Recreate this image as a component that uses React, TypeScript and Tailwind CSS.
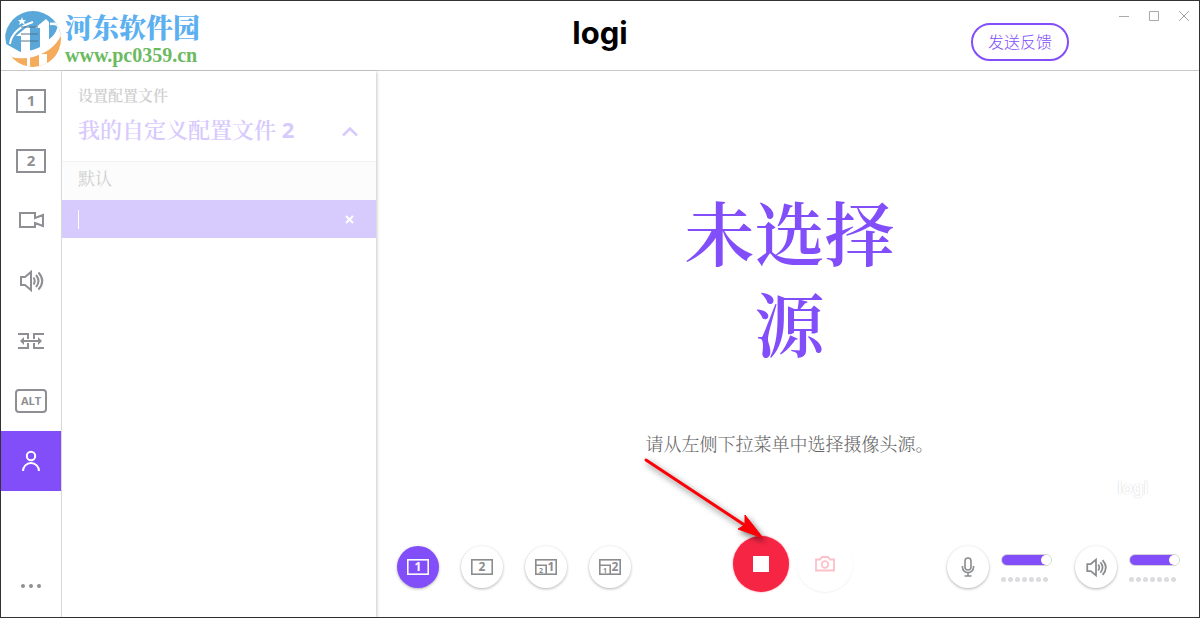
import type { ReactNode } from "react"
import clsx from "clsx"

const sans = "font-['Open_Sans','Noto_Sans_CJK_SC',sans-serif]"
const cjk = "font-['Open_Sans','Noto_Serif_CJK_SC','Noto_Sans_CJK_SC',sans-serif]"

/* ---------- Icons ---------- */

function Screen({ n }: { n: string }) {
	return (
		<svg width="32" height="26" viewBox="0 0 32 26" fill="none" stroke="currentColor" strokeWidth="2">
			<rect x="2" y="2" width="28" height="22" />
			<text x="16" y="18" textAnchor="middle" fontSize="15" fontWeight="700" fill="currentColor" stroke="none">{n}</text>
		</svg>
	)
}

function Camcorder() {
	return (
		<svg width="32" height="26" viewBox="0 0 32 26" fill="none" stroke="currentColor" strokeWidth="2">
			<path d="M5 5h15v5l8-3v11l-8-3v4H5z" />
		</svg>
	)
}

function Speaker({ small }: { small?: boolean }) {
	return (
		<svg width={small ? 28 : 32} height={small ? 23 : 26} viewBox="0 0 32 26" fill="none" stroke="currentColor" strokeWidth="2">
			<path d="M6 9h4l6-5v18l-6-5H6z" />
			<path d="M18.500 9.500Q21 13 18.500 16.500M21 7Q26 13 21 19M23.500 4.500Q31 13 23.500 21.500" />
		</svg>
	)
}

function Transition() {
	return (
		<svg width="32" height="26" viewBox="0 0 32 26" fill="none" stroke="currentColor" strokeWidth="2">
			<path d="M3 6h10v5M29 6H19v5M3 20h10v-5M29 20H19v-5M8 13h16" />
			<path d="M9 9v8l-4-4zM23 9v8l4-4z" fill="currentColor" stroke="none" />
		</svg>
	)
}

function Alt() {
	return (
		<svg width="32" height="26" viewBox="0 0 32 26" fill="none" stroke="currentColor" strokeWidth="2">
			<rect x="1" y="2" width="30" height="22" rx="3" />
			<text x="16" y="17" textAnchor="middle" fontSize="11" fontWeight="700" fill="currentColor" stroke="none">ALT</text>
		</svg>
	)
}

function Person() {
	return (
		<svg width="32" height="26" viewBox="0 0 32 26" fill="none" stroke="currentColor" strokeWidth="2">
			<circle cx="16" cy="8" r="4.200" />
			<path d="M8 23a8 8 0 0 1 16 0" />
		</svg>
	)
}

function Scene({ main, inset }: { main: string; inset?: string }) {
	return (
		<svg width="22" height="16" viewBox="0 0 22 16" fill="none" stroke="currentColor" strokeWidth="1.6" fontWeight="700">
			<rect x="0.800" y="0.800" width="20.400" height="14.400" />
			{inset && <path d="M1 6.200h10.200V15" />}
			{inset && <text x="6" y="13.500" textAnchor="middle" fontSize="7" fill="currentColor" stroke="none">{inset}</text>}
			<text x={inset ? 16 : 11} y="12" textAnchor="middle" fontSize="12" fill="currentColor" stroke="none">{main}</text>
		</svg>
	)
}

function Mic() {
	return (
		<svg width="14" height="20" viewBox="0 0 14 20" fill="none" stroke="currentColor" strokeWidth="1.6">
			<rect x="4" y="1" width="6" height="12" rx="3" />
			<path d="M1.500 9v1.500a5.500 5 0 0 0 11 0V9M7 15.500V19M3.500 19h7" />
		</svg>
	)
}

function Camera() {
	return (
		<svg width="20" height="16" viewBox="0 0 20 16" fill="none" stroke="currentColor" strokeWidth="1.800">
			<path d="M1 3.500h4L7 1h6l2 2.500h4V14.500H1z" />
			<circle cx="10" cy="8.500" r="3.300" />
		</svg>
	)
}

function SiteMark() {
	return (
		<svg className="shrink-0" width="62" height="62" viewBox="0 0 62 62">
			<clipPath id="disc"><circle cx="31" cy="31" r="28" /></clipPath>
			<g clipPath="url(#disc)">
				<path d="M0 0h62v24L40 42 22 46 4 36z" fill="#5aa8d9" />
				<path d="M5 45q11 8 26 4Q53 43 60 25v37H5z" fill="#f5ab5c" />
				{/* rings */}
				<path d="M8 36C9 26 18 18 31 14" stroke="#fff" strokeWidth="2" fill="none" />
				<path d="M1 36c4 10 13 13 26 10 14-3 27-12 31-24" stroke="#fff" strokeWidth="6" fill="none" />
				<path d="M48 16c6-1 10 1 8 6-2 6-7 10-12 13" stroke="#fff" strokeWidth="2.500" fill="none" />
				{/* buildings */}
				<path d="M14 28l12-10 2 2v24h-9V28z" fill="#fff" />
				<path d="M33 20l11-9 3 3v24l-9 4V20z" fill="#fff" />
				<path d="M25 49h3v12h-3zM37 46h8v14h-8z" fill="#fff" />
			</g>
			<path d="M20 9l1 3h3l-2 2 1 3-3-2-3 2 1-3-2-2h3z" fill="#fff" />
			<path d="M19 19h17M19 26h17M19 33h17" stroke="#53748c" strokeWidth="1.500" opacity=".65" />
		</svg>
	)
}

/* ---------- Pieces ---------- */

const navItems: { label: string; icon: ReactNode }[] = [
	{ label: "1", icon: <Screen n="1" /> },
	{ label: "2", icon: <Screen n="2" /> },
	{ label: "video", icon: <Camcorder /> },
	{ label: "audio", icon: <Speaker /> },
	{ label: "transition", icon: <Transition /> },
	{ label: "alt", icon: <Alt /> },
	{ label: "profile", icon: <Person /> },
]

function RoundButton({ label, active, children }: { label: string; active?: boolean; children: ReactNode }) {
	return (
		<button
			aria-label={label}
			className={clsx(
				"flex size-[42px] shrink-0 items-center justify-center rounded-full shadow-[0_1px_3px_rgba(0,0,0,0.3)]",
				active ? "bg-[#814efa] text-white" : "bg-white text-[#8b8c8e]",
			)}
		>
			{children}
		</button>
	)
}

function Level({ label, icon }: { label: string; icon: ReactNode }) {
	return (
		<div className="flex items-center gap-3">
			<RoundButton label={label}>{icon}</RoundButton>
			<div className="flex w-[51px] flex-col gap-[11px] pt-[2px]">
				<input
					type="range"
					aria-label={label + " level"}
					defaultValue={100}
					className="h-3 w-full appearance-none rounded-full border border-[#d3d3d6] bg-linear-to-r from-[#814efa] from-90% to-white to-90% [&::-webkit-slider-thumb]:size-[10px] [&::-webkit-slider-thumb]:appearance-none [&::-webkit-slider-thumb]:rounded-full [&::-webkit-slider-thumb]:bg-white"
				/>
				<div className="flex gap-[2px]">
					{[0, 1, 2, 3, 4, 5, 6].map((i) => (
						<span key={i} className="size-[5px] rounded-full bg-[#dcdcdf]" />
					))}
				</div>
			</div>
		</div>
	)
}

export default function App() {
	return (
		<div className={clsx("flex min-h-screen w-full flex-col border border-[#333] bg-white", sans)}>

			{/* Title bar */}
			<header className="grid h-[70px] shrink-0 grid-cols-[1fr_auto_1fr] border-b border-[#c8c8c8]">
				<div className="flex items-center pt-[6px] pl-px">
					<SiteMark />
					<div className="pl-px font-bold whitespace-nowrap">
						<div className="font-['Noto_Serif_CJK_SC','Noto_Sans_CJK_SC',serif] text-[27px] leading-8 font-black text-[#5db0f0]">河东软件园</div>
						<div className="font-['Liberation_Serif',serif] text-xl leading-6 text-[#6cba60]">www.pc0359.cn</div>
					</div>
				</div>
				<div className="pt-3 font-['Inter',sans-serif] text-[31px] leading-10 font-bold text-black">logi</div>
				<div className="flex items-start justify-end">
					<button className="mt-[22px] mr-10 h-[38px] w-[98px] rounded-full border-2 border-[#814efa] text-base font-light text-[#814efa]">发送反馈</button>
					{["M0 5.500h10", "M.5.5h9v9h-9z", "M0 0l10 10M10 0L0 10"].map((d, i) => (
						<button key={d} aria-label={["minimize", "maximize", "close"][i]} className="flex size-[30px] items-center justify-center text-[#aaa]">
							<svg width="10" height="10" viewBox="0 0 10 10" fill="none" stroke="currentColor"><path d={d} /></svg>
						</button>
					))}
				</div>
			</header>

			<div className="flex flex-1">
				{/* Sidebar */}
				<nav className="flex w-[61px] shrink-0 flex-col border-r border-[#e2e2e4]">
					{navItems.map((item) => (
						<button
							key={item.label}
							aria-label={item.label}
							className={clsx(
								"flex h-[60px] items-center justify-center",
								item.label === "profile" ? "bg-[#814efa] text-white" : "text-[#8e8f93]",
							)}
						>
							{item.icon}
						</button>
					))}
					<button aria-label="more" className="mt-auto flex h-[62px] items-center justify-center gap-1">
						<span className="size-[4px] rounded-full bg-[#8e8f93]" />
						<span className="size-[4px] rounded-full bg-[#8e8f93]" />
						<span className="size-[4px] rounded-full bg-[#8e8f93]" />
					</button>
				</nav>

				{/* Profiles */}
				<section className="w-[314px] shrink-0 shadow-[1px_1px_3px_rgba(0,0,0,0.22)]">
					<div className="h-[91px] border-b border-[#f3f3f3] px-4 pt-3">
						<div className={clsx("text-[15px] leading-6 font-semibold text-[#cfcfcf]", cjk)}>设置配置文件</div>
						<button className={clsx("flex w-full items-center justify-between text-[22px] leading-8 font-semibold text-[#d7cafd]", cjk)}>
							<span className="pt-[6px]">我的自定义配置文件 <span className="font-bold">2</span></span>
							<svg className="mt-3 mr-[2px]" width="16" height="10" viewBox="0 0 16 10" fill="none" stroke="currentColor" strokeWidth="2.500"><path d="M1 8.500l7-7 7 7" /></svg>
						</button>
					</div>
					<button className={clsx("block h-[38px] w-full bg-[#fcfcfc] px-4 pb-1 text-left text-[17px] text-[#cfcfcf]", cjk)}>默认</button>
					<div className="flex h-[38px] items-center justify-between bg-[#d7cafd] px-4">
						<input aria-label="profile name" className="h-[19px] min-w-0 flex-1 border-l border-white bg-transparent text-white outline-none" />
						<button aria-label="clear" className="mr-[6px] text-white">
							<svg width="9" height="9" viewBox="0 0 9 9" stroke="currentColor" strokeWidth="2"><path d="M1 1l7 7M8 1L1 8" /></svg>
						</button>
					</div>
				</section>

				{/* Stage */}
				<main className="flex min-w-0 flex-1 flex-col">
					<div className={clsx("relative flex flex-1 flex-col items-center pt-[118px] pl-1", cjk)}>
						<h1 className="w-[276px] text-center text-[70px] leading-[91px] font-semibold text-[#814efa]">未选择源</h1>
						<p className="mt-[61px] text-[18px] leading-6 font-light whitespace-nowrap text-[#666]">请从左侧下拉菜单中选择摄像头源。</p>
						<div className="absolute right-[51px] bottom-9 font-['Inter',sans-serif] text-[17px] leading-6 font-bold text-white [text-shadow:0_0_1px_#bbb]">logi</div>
					</div>

					{/* Controls */}
					<div className="flex items-center justify-between pr-[19px] pb-[19px] pl-[21px]">
						<div className="flex gap-[22px]">
							<RoundButton label="scene 1" active><Scene main="1" /></RoundButton>
							<RoundButton label="scene 2"><Scene main="2" /></RoundButton>
							<RoundButton label="scene 1 with inset 2"><Scene main="1" inset="2" /></RoundButton>
							<RoundButton label="scene 2 with inset 1"><Scene main="2" inset="1" /></RoundButton>
						</div>
						<div className="relative flex gap-2 pb-[6px] pl-2">
							<button aria-label="stop" className="flex size-14 items-center justify-center rounded-full bg-[#f72544] shadow-[0_0_2px_rgba(247,37,68,0.6)]">
								<span className="size-4 bg-white" />
							</button>
							<button aria-label="snapshot" className="flex size-14 items-center justify-center rounded-full bg-white text-[#fcc0c9] shadow-[0_1px_2px_rgba(0,0,0,0.06)]">
								<Camera />
							</button>
							<svg className="pointer-events-none absolute -top-[83px] -left-[86px] drop-shadow-[2px_3px_3px_rgba(0,0,0,0.55)]" width="136" height="100" viewBox="0 0 136 100">
								<path d="M7 7l100 66" stroke="#fb0007" strokeWidth="3" strokeLinecap="round" />
								<path d="M124 85L99 76l7-4 0-10z" fill="#fb0007" stroke="#fb0007" />
							</svg>
						</div>
						<div className="flex gap-[23px]">
							<Level label="microphone" icon={<Mic />} />
							<Level label="volume" icon={<Speaker small />} />
						</div>
					</div>
				</main>
			</div>
		</div>
	)
}
